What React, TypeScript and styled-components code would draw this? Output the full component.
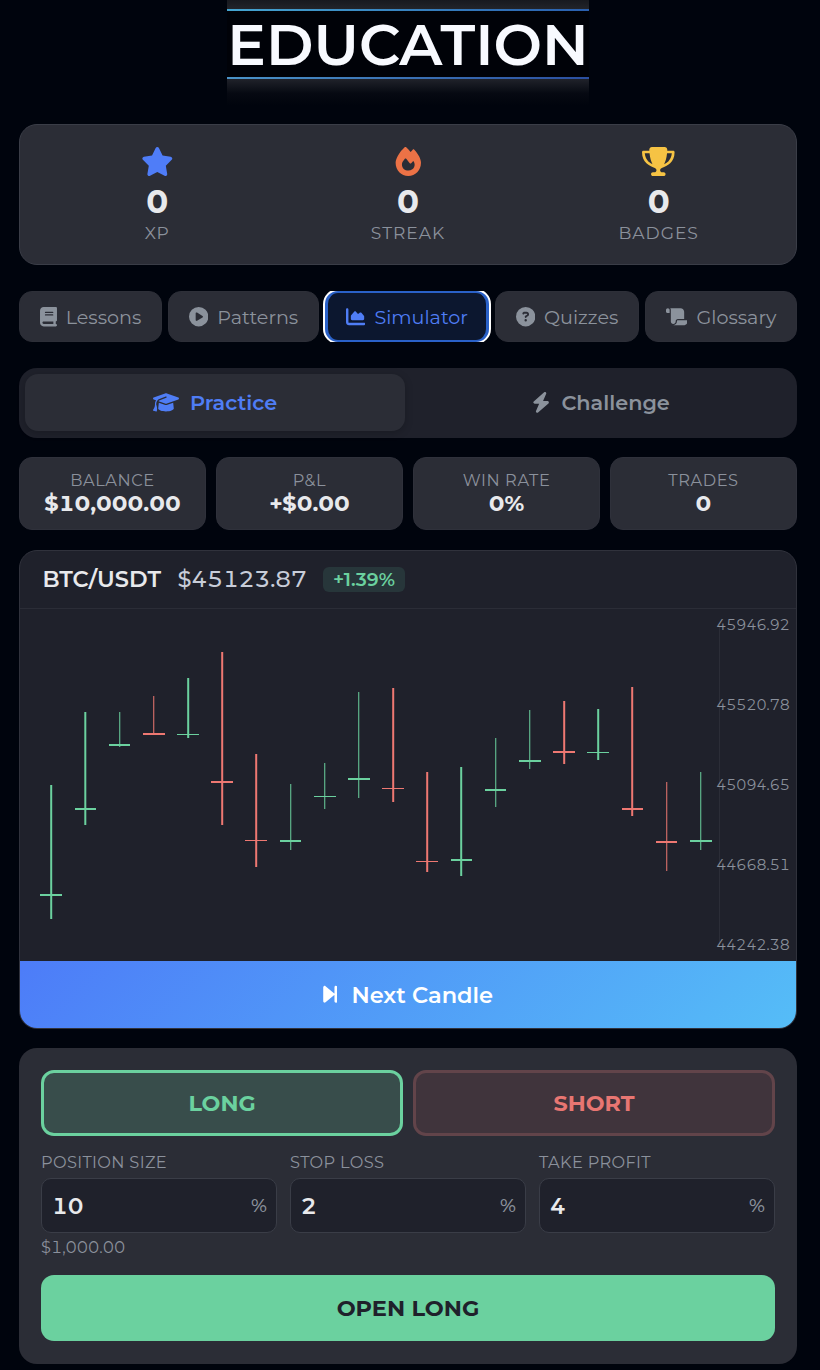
import React from "react";
import styled, { createGlobalStyle } from "styled-components";
import {
  FaStar, FaFire, FaTrophy, FaBook, FaCirclePlay, FaChartArea, FaCircleQuestion,
  FaScroll, FaGraduationCap, FaBolt, FaForwardStep,
} from "react-icons/fa6";

const GlobalStyle = createGlobalStyle`
  *, *::before, *::after { box-sizing: border-box; }
  body {
    margin: 0;
    background: #00040d;
    color: #e8e9ec;
    font-family: Montserrat, Inter, "Liberation Sans", sans-serif;
    overflow-x: hidden;
  }
  button, input { font-family: inherit; }
  svg { display: block; flex: none; }
`;

const Page = styled.main`
  width: 820px;
  height: 1370px;
  overflow: hidden;
  padding: 0 23px 0 19px;
  display: flex;
  flex-direction: column;
`;

const Hero = styled.header`
  width: 362px;
  height: 105px;
  margin: 0 auto;
  display: flex;
  flex-direction: column;
`;
const HeroCap = styled.div`
  height: 9px;
  background: linear-gradient(#17191f, #22242a);
`;
const HeroLine = styled.div<{ $dim?: boolean }>`
  height: 2px;
  background: ${(p) =>
    p.$dim ? "linear-gradient(90deg, #4a93c8, #2b4fa0)" : "linear-gradient(90deg, #45a5d0, #2a5fae)"};
`;
const HeroTitle = styled.h1`
  margin: 0;
  height: 66px;
  background: #000208;
  color: #f8faff;
  font-size: 57.6px;
  font-weight: 600;
  line-height: 67px;
  text-align: center;
  white-space: nowrap;
`;
const HeroFade = styled.div`
  height: 26px;
  background: linear-gradient(#20222a, rgba(10, 13, 21, 0.6) 55%, rgba(0, 4, 13, 0));
`;

const Summary = styled.section`
  margin-top: 19px;
  height: 141px;
  padding: 0 12px;
  border: 1px solid #3a3d47;
  border-radius: 18px;
  background: #2b2d36;
  display: grid;
  grid-template-columns: repeat(3, 1fr);
`;
const SummaryItem = styled.div`
  display: flex;
  flex-direction: column;
  align-items: center;
  padding-top: 22px;
`;
const SummaryIcon = styled.span<{ $color: string }>`
  color: ${(p) => p.$color};
  svg { height: 29px; width: 32.6px; }
`;
const SummaryValue = styled.strong`
  margin-top: 5.5px;
  font-size: 32.4px;
  font-weight: 700;
  line-height: 40px;
`;
const SummaryLabel = styled.span`
  margin-top: -1px;
  font-size: 17.1px;
  font-weight: 400;
  line-height: 24px;
  letter-spacing: 1px;
  color: #8b919c;
`;

const Tabs = styled.nav`
  margin-top: 26px;
  height: 51px;
  display: grid;
  grid-template-columns: 143px 151px 164px 144px 152px;
  gap: 6px;
  margin-right: -4px;
  overflow: hidden;
`;
const Tab = styled.button<{ $active?: boolean; $icon: number }>`
  display: flex;
  align-items: center;
  justify-content: center;
  gap: 9px;
  padding: 1px 0 0;
  border-style: solid;
  border-width: ${(p) => (p.$active ? "2px 3px" : "1px")};
  border-color: ${(p) => (p.$active ? "#2a61c8" : "#2d2f38")};
  border-radius: 13px;
  background: ${(p) => (p.$active ? "#0c172f" : "#2b2d36")};
  box-shadow: ${(p) => (p.$active ? "0 0 0 2px #fff" : "none")};
  color: ${(p) => (p.$active ? "#4f7df5" : "#8b929c")};
  font-size: 19.15px;
  font-weight: 400;
  white-space: nowrap;
  svg { height: 19.4px; width: ${(p) => p.$icon}px; }
`;

const Segment = styled.div`
  margin-top: 26px;
  height: 70px;
  padding: 6px 6px 7px;
  border-radius: 18px;
  background: #1f212b;
  display: grid;
  grid-template-columns: 380px 1fr;
`;
const SegmentButton = styled.button<{ $active?: boolean; $icon: number }>`
  display: flex;
  align-items: center;
  justify-content: center;
  gap: 11px;
  padding: 0 0 0 ${(p) => (p.$active ? 0 : 6)}px;
  border: 0;
  border-radius: 13px;
  background: ${(p) => (p.$active ? "#2b2d36" : "transparent")};
  box-shadow: ${(p) => (p.$active ? "0 2px 8px rgba(0, 0, 0, 0.2)" : "none")};
  color: ${(p) => (p.$active ? "#4f7df5" : "#8b929c")};
  font-size: 20.8px;
  font-weight: 600;
  svg { height: 20.8px; width: ${(p) => p.$icon}px; }
`;

const Metrics = styled.section`
  margin-top: 19px;
  height: 73px;
  display: grid;
  grid-template-columns: repeat(4, 1fr);
  gap: 10px;
`;
const Metric = styled.div`
  padding-top: 11px;
  border: 1px solid #2f313b;
  border-radius: 13px;
  background: #2b2d36;
  display: flex;
  flex-direction: column;
  align-items: center;
`;
const MetricLabel = styled.span`
  font-size: 16.2px;
  font-weight: 400;
  line-height: 22px;
  letter-spacing: 0.6px;
  color: #8b919c;
`;
const MetricValue = styled.strong`
  font-size: 22.5px;
  font-weight: 700;
  line-height: 24px;
  font-variant-numeric: tabular-nums;
`;

const ChartCard = styled.section`
  margin-top: 20px;
  height: 479px;
  border: 1px solid #30323c;
  border-radius: 18px;
  background: #1f212b;
  overflow: hidden;
  display: flex;
  flex-direction: column;
`;
const ChartHead = styled.div`
  height: 58px;
  padding: 0 0 1px 22.5px;
  border-bottom: 1px solid #2b2d37;
  display: flex;
  align-items: center;
`;
const Pair = styled.strong`
  width: 119px;
  font-size: 22.5px;
  font-weight: 600;
  white-space: nowrap;
`;
const Price = styled.span`
  margin-left: 16px;
  width: 130px;
  font-size: 22.5px;
  font-weight: 500;
  font-variant-numeric: tabular-nums;
  color: #c8cdd9;
  white-space: nowrap;
`;
const Change = styled.span`
  margin-left: 15.5px;
  width: 82px;
  height: 25px;
  border-radius: 6px;
  background: #27363a;
  color: #6bd19f;
  font-size: 18.9px;
  font-weight: 600;
  line-height: 25px;
  text-align: center;
`;
const ChartSvg = styled.svg`
  width: 776px;
  height: 352px;
  text {
    font-size: 14.4px;
    font-weight: 400;
    font-variant-numeric: tabular-nums;
    fill: #8b919c;
  }
`;
const NextButton = styled.button`
  flex: 1;
  padding: 0;
  border: 0;
  background: linear-gradient(135deg, #4d7cf8, #55bdf7);
  color: #fff;
  display: flex;
  align-items: center;
  justify-content: center;
  gap: 14px;
  font-size: 22.5px;
  font-weight: 600;
  svg { height: 22.5px; width: 14.5px; }
`;

const Order = styled.section`
  margin-top: 19px;
  height: 316px;
  padding: 22px;
  border-radius: 18px;
  background: #2b2d36;
`;
const Sides = styled.div`
  display: grid;
  grid-template-columns: 1fr 1fr;
  gap: 10px;
  height: 66px;
`;
const Side = styled.button<{ $long?: boolean }>`
  border: 3px solid ${(p) => (p.$long ? "#6bd19f" : "#62444a")};
  border-radius: 13px;
  background: ${(p) => (p.$long ? "#384d4b" : "#40343c")};
  color: ${(p) => (p.$long ? "#6bd19f" : "#e87672")};
  font-size: 22.3px;
  font-weight: 700;
`;
const Fields = styled.div`
  margin-top: 15px;
  height: 124px;
  display: grid;
  grid-template-columns: repeat(3, 1fr);
  gap: 13px;
`;
const Field = styled.label`
  display: flex;
  flex-direction: column;
  min-width: 0;
`;
const FieldLabel = styled.span`
  font-size: 16.2px;
  font-weight: 400;
  line-height: 22px;
  height: 27px;
  letter-spacing: 0.35px;
  color: #8b919c;
`;
const InputBox = styled.span`
  height: 55px;
  padding: 0 9px 0 10px;
  border: 1px solid #3a3d47;
  border-radius: 10px;
  background: #1f212b;
  display: flex;
  align-items: center;
`;
const Input = styled.input`
  flex: 1;
  min-width: 0;
  padding: 0;
  border: 0;
  outline: 0;
  background: transparent;
  color: #e8e9ec;
  font-size: 22.5px;
  font-weight: 600;
  font-variant-numeric: tabular-nums;
`;
const Unit = styled.span`
  font-size: 18.9px;
  font-weight: 500;
  color: #8b919c;
`;
const Hint = styled.span`
  margin-top: 3px;
  font-size: 16.1px;
  font-weight: 400;
  line-height: 22px;
  font-variant-numeric: tabular-nums;
  color: #8b919c;
`;
const Submit = styled.button`
  width: 100%;
  height: 66px;
  border: 0;
  border-radius: 13px;
  background: #6bd19f;
  color: #1f212b;
  font-size: 22.5px;
  font-weight: 700;
`;

const UP = "#6bd19f";
const DOWN = "#ee7872";

/* x, wick width, high, low, body x, body width, body y, body height, rising */
type Candle = [number, number, number, number, number, number, number, number, boolean];
const candles: Candle[] = [
  [30.2, 2, 176, 310, 20, 22, 285, 2, true],
  [64.3, 2, 103, 216, 55, 21, 199, 2, true],
  [99.25, 1, 103, 138, 89, 21, 135, 2, true],
  [133.25, 1, 87, 126, 123, 22, 124, 2, false],
  [167.2, 2, 69, 129, 157, 22, 125, 1, true],
  [201.2, 2, 43, 216, 191, 22, 172, 2, false],
  [235.2, 2, 145, 258, 225, 22, 231, 1, false],
  [270.25, 1, 175, 241, 260, 21, 231, 2, true],
  [304.25, 1, 154, 200, 294, 22, 187, 1, true],
  [338.25, 1, 83, 189, 328, 22, 169, 2, true],
  [372.2, 2, 79, 193, 362, 22, 179, 1, false],
  [406.2, 2, 163, 263, 396, 22, 252, 1, false],
  [440.2, 2, 158, 267, 431, 21, 250, 2, true],
  [475.25, 1, 129, 198, 465, 21, 180, 2, true],
  [509.25, 1, 101, 160, 499, 22, 151, 2, true],
  [543.2, 2, 92, 155, 533, 22, 142, 2, false],
  [577.2, 2, 100, 151, 567, 22, 143, 1, true],
  [611.2, 2, 78, 207, 602, 21, 199, 2, false],
  [646.25, 1, 173, 262, 636, 21, 232, 2, false],
  [680.25, 1, 163, 241, 670, 22, 231, 2, true],
];
const levels = ["45946.92", "45520.78", "45094.65", "44668.51", "44242.38"];

const summary = [
  { icon: <FaStar />, color: "#4f7df8", value: "0", label: "XP" },
  { icon: <FaFire />, color: "#ec7246", value: "0", label: "STREAK" },
  { icon: <FaTrophy />, color: "#f6c344", value: "0", label: "BADGES" },
];
const tabs = [
  { icon: <FaBook />, label: "Lessons", width: 17 },
  { icon: <FaCirclePlay />, label: "Patterns", width: 19.4 },
  { icon: <FaChartArea />, label: "Simulator", width: 19.4, active: true },
  { icon: <FaCircleQuestion />, label: "Quizzes", width: 19.4 },
  { icon: <FaScroll />, label: "Glossary", width: 21.8 },
];
const metrics = [
  ["BALANCE", "$10,000.00"],
  ["P&L", "+$0.00"],
  ["WIN RATE", "0%"],
  ["TRADES", "0"],
];
const fields = [
  { label: "POSITION SIZE", value: "10", hint: "$1,000.00" },
  { label: "STOP LOSS", value: "2" },
  { label: "TAKE PROFIT", value: "4" },
];

function CandleChart() {
  return (
    <ChartSvg viewBox="0 0 776 352">
      <rect x="699" y="16" width="1" height="320" fill="#2b2d37" />
      {candles.map(([x, w, high, low, bx, bw, by, bh, up]) => (
        <g key={x} fill={up ? UP : DOWN}>
          <rect x={x} y={high} width={w} height={low - high} />
          <rect x={bx} y={by} width={bw} height={bh} />
        </g>
      ))}
      {levels.map((level, i) => (
        <text key={level} x="769.8" y={21.4 + i * 80} textAnchor="end">{level}</text>
      ))}
    </ChartSvg>
  );
}

export default function App() {
  return (
    <>
      <GlobalStyle />
      <Page>
        <Hero>
          <HeroCap />
          <HeroLine />
          <HeroTitle>EDUCATION</HeroTitle>
          <HeroLine $dim />
          <HeroFade />
        </Hero>
        <Summary>
          {summary.map((s) => (
            <SummaryItem key={s.label}>
              <SummaryIcon $color={s.color}>{s.icon}</SummaryIcon>
              <SummaryValue>{s.value}</SummaryValue>
              <SummaryLabel>{s.label}</SummaryLabel>
            </SummaryItem>
          ))}
        </Summary>
        <Tabs>
          {tabs.map((t) => (
            <Tab key={t.label} $active={t.active} $icon={t.width}>
              {t.icon}
              {t.label}
            </Tab>
          ))}
        </Tabs>
        <Segment>
          <SegmentButton $active $icon={26}><FaGraduationCap />Practice</SegmentButton>
          <SegmentButton $icon={18.2}><FaBolt />Challenge</SegmentButton>
        </Segment>
        <Metrics>
          {metrics.map(([label, value]) => (
            <Metric key={label}>
              <MetricLabel>{label}</MetricLabel>
              <MetricValue>{value}</MetricValue>
            </Metric>
          ))}
        </Metrics>
        <ChartCard>
          <ChartHead>
            <Pair>BTC/USDT</Pair>
            <Price>$45123.87</Price>
            <Change>+1.39%</Change>
          </ChartHead>
          <CandleChart />
          <NextButton><FaForwardStep />Next Candle</NextButton>
        </ChartCard>
        <Order>
          <Sides>
            <Side $long>LONG</Side>
            <Side>SHORT</Side>
          </Sides>
          <Fields>
            {fields.map((f) => (
              <Field key={f.label}>
                <FieldLabel>{f.label}</FieldLabel>
                <InputBox>
                  <Input defaultValue={f.value} />
                  <Unit>%</Unit>
                </InputBox>
                {f.hint && <Hint>{f.hint}</Hint>}
              </Field>
            ))}
          </Fields>
          <Submit>OPEN LONG</Submit>
        </Order>
      </Page>
    </>
  );
}
